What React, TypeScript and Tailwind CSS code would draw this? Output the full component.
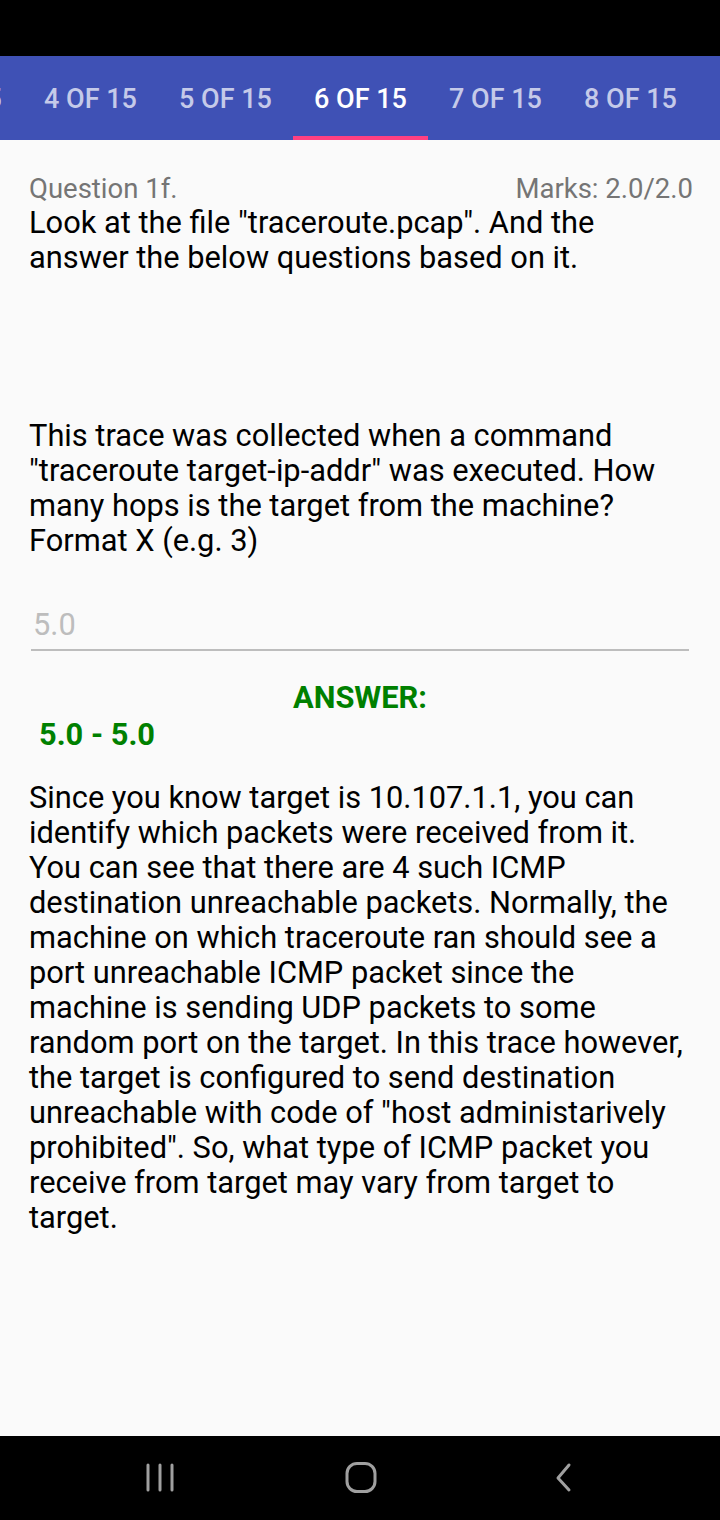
import React from "react";

const tabs = ["3 OF 15", "4 OF 15", "5 OF 15", "6 OF 15", "7 OF 15", "8 OF 15"];

export default function App() {
  return (
    <div className="w-[720px] h-[1520px] flex flex-col bg-[#fafafa] font-['Roboto',sans-serif] overflow-hidden">
      <div className="h-[56px] bg-black shrink-0" />
      <div className="h-[84px] bg-[#3f51b5] shrink-0 overflow-hidden">
        <div className="flex h-full ml-[-112px]">
          {tabs.map((t, i) => (
            <div
              key={t}
              className={
                "w-[135px] shrink-0 h-full flex items-center justify-center relative text-[27px] font-medium pt-[2px] " +
                (i === 3 ? "text-white" : "text-[#c5cae9]")
              }
            >
              {t}
              {i === 3 && <div className="absolute left-0 right-0 bottom-0 h-[4px] bg-[#ff4081]" />}
            </div>
          ))}
        </div>
      </div>

      <div className="flex-1 px-[29px] pt-[30px] text-[30.8px] leading-[35px] text-black">
        <div className="flex justify-between text-[27.5px] text-[#757575] pt-[1px]">
          <span>Question 1f.</span>
          <span className="mr-[-2px]">Marks: 2.0/2.0</span>
        </div>
        <p className="mt-[-1px]">Look at the file "traceroute.pcap". And the answer the below questions based on it.</p>

        <p className="mt-[143px]">
          This trace was collected when a command "traceroute target-ip-addr" was executed. How many hops is the
          target from the machine? Format X (e.g. 3)
        </p>

        <div className="mt-[49px] mx-[2px] border-b-2 border-[#bdbdbd] pb-[7px]">
          <span className="text-[#bdbdbd] pl-[2px]">5.0</span>
        </div>

        <div className="mt-[29px] text-center font-bold text-[#008000]">ANSWER:</div>
        <div className="mt-[2px] pl-[10px] font-bold text-[#008000]">5.0 - 5.0</div>

        <p className="mt-[28px]">
          Since you know target is 10.107.1.1, you can identify which packets were received from it. You can see that
          there are 4 such ICMP destination unreachable packets. Normally, the machine on which traceroute ran should
          see a port unreachable ICMP packet since the machine is sending UDP packets to some random port on the
          target. In this trace however, the target is configured to send destination unreachable with code of "host
          administarively prohibited". So, what type of ICMP packet you receive from target may vary from target to
          target.
        </p>
      </div>

      <div className="h-[84px] bg-black shrink-0 flex items-center pl-[140px] gap-[161px]">
        <svg width="40" height="40" viewBox="0 0 40 40">
          <g stroke="#a0a0a0" strokeWidth="3" strokeLinecap="round">
            <line x1="8" y1="7" x2="8" y2="32" />
            <line x1="20" y1="7" x2="20" y2="32" />
            <line x1="32" y1="7" x2="32" y2="32" />
          </g>
        </svg>
        <svg width="40" height="40" viewBox="0 0 40 40">
          <rect x="6" y="5.5" width="28" height="28" rx="10" fill="none" stroke="#a0a0a0" strokeWidth="3" />
        </svg>
        <svg width="40" height="40" viewBox="0 0 40 40">
          <polyline points="27,7 16,20 27,32" fill="none" stroke="#a0a0a0" strokeWidth="3" strokeLinecap="round" strokeLinejoin="round" />
        </svg>
      </div>
    </div>
  );
}
